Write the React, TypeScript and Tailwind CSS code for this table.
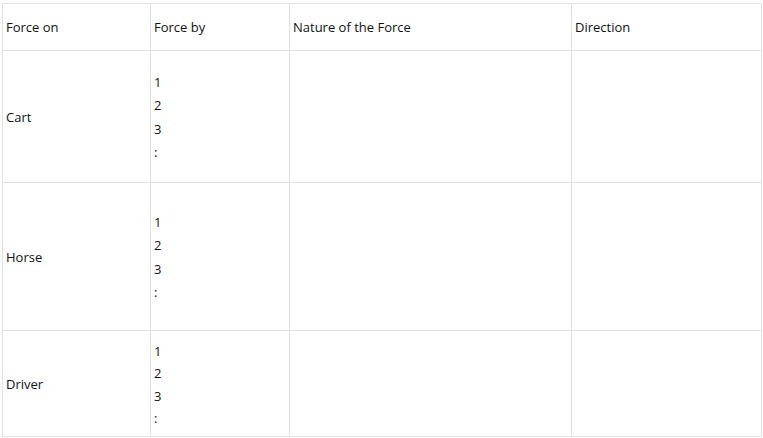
const rows = [
  {name: 'Cart', h: 'h-[132px]', gap: 'leading-[23.5px]'},
  {name: 'Horse', h: 'h-[148px]', gap: 'leading-[23.5px]'},
  {name: 'Driver', h: 'h-[106px]', gap: 'leading-[22.5px]'},
];

export default function App() {
  return (
    <div className="min-h-screen bg-white pt-[3px] pl-[2px] font-['Open_Sans',sans-serif] text-[13px] text-[#111]">
      <table className="w-[759px] table-fixed border-collapse">
        <colgroup>
          <col className="w-[148px]" />
          <col className="w-[139px]" />
          <col className="w-[282px]" />
          <col className="w-[190px]" />
        </colgroup>
        <thead>
          <tr className="h-[47px]">
            <td className="border border-[#e2e2e2] px-[3px] pt-[2px] align-middle">Force on</td>
            <td className="border border-[#e2e2e2] px-[3px] pt-[2px] align-middle">Force by</td>
            <td className="border border-[#e2e2e2] px-[3px] pt-[2px] align-middle">Nature of the Force</td>
            <td className="border border-[#e2e2e2] px-[3px] pt-[2px] align-middle">Direction</td>
          </tr>
        </thead>
        <tbody>
          {rows.map((r) => (
            <tr key={r.name} className={r.h}>
              <td className="border border-[#e2e2e2] px-[3px] pt-[2px] align-middle">{r.name}</td>
              <td className="border border-[#e2e2e2] px-[3px] pt-[2px] align-middle">
                <div className={`flex flex-col ${r.gap}`}>
                  <span>1</span>
                  <span>2</span>
                  <span>3</span>
                  <span>:</span>
                </div>
              </td>
              <td className="border border-[#e2e2e2]" />
              <td className="border border-[#e2e2e2]" />
            </tr>
          ))}
        </tbody>
      </table>
    </div>
  );
}
